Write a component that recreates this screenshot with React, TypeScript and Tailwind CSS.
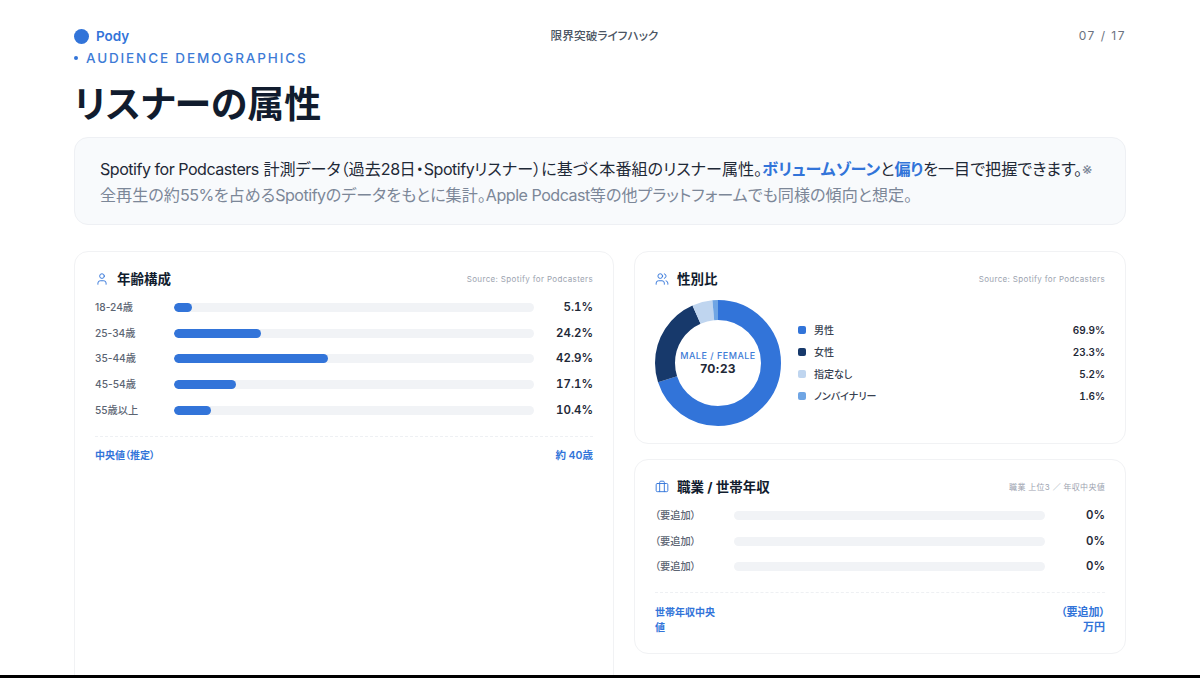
import React from "react";
import { User, Users, Briefcase } from "lucide-react";

const ages = [
  ["18-24歳", 5.1],
  ["25-34歳", 24.2],
  ["35-44歳", 42.9],
  ["45-54歳", 17.1],
  ["55歳以上", 10.4],
] as const;

const genders = [
  ["男性", "69.9%", "#3274d9", 69.9],
  ["女性", "23.3%", "#17396b", 23.3],
  ["指定なし", "5.2%", "#bfd5ef", 5.2],
  ["ノンバイナリー", "1.6%", "#6fa5e4", 1.6],
] as const;

function Bar({ label, value, pct, labelW, valW }: { label: string; value: string; pct: number; labelW: string; valW: string }) {
  return (
    <div className="flex items-center h-[25.6px]">
      <div className={`${labelW} shrink-0 text-[10.2px] font-medium text-[#5b6472]`}>{label}</div>
      <div className="flex-1 h-[9px] rounded-full bg-[#f1f3f6] overflow-hidden">
        <div className="h-full rounded-full bg-[#3274d9]" style={{ width: `${pct}%` }} />
      </div>
      <div className={`${valW} shrink-0 text-right text-[11.5px] font-semibold tabular-nums text-[#1f2937]`}>{value}</div>
    </div>
  );
}

function Donut() {
  const r = 53;
  const c = 2 * Math.PI * r;
  let acc = 0;
  return (
    <svg width="126" height="126" viewBox="0 0 126 126" className="shrink-0">
      <g transform="rotate(-90 63 63)">
        {genders.map(([name, , color, v]) => {
          const len = (v / 100) * c;
          const el = (
            <circle key={name} cx="63" cy="63" r={r} fill="none" stroke={color} strokeWidth="20" strokeDasharray={`${len} ${c - len}`} strokeDashoffset={-acc} />
          );
          acc += len;
          return el;
        })}
      </g>
    </svg>
  );
}

function L({ children }: { children: React.ReactNode }) {
  return <span className="tracking-[-0.5px]">{children}</span>;
}

export default function App() {
  return (
    <div className="w-[1200px] h-[678px] overflow-hidden bg-white flex flex-col font-['Inter','Noto_Sans_CJK_JP',sans-serif] [font-feature-settings:'palt'] text-[#0f1b2d]">
      <div className="h-[675px] overflow-hidden px-[74px] pt-[26px]">
        <div className="grid grid-cols-[1fr_auto_1fr] items-center h-[18px]">
          <div className="flex items-center gap-[7px]">
            <span className="w-[15px] h-[15px] rounded-full bg-[#3274d9]" />
            <span className="text-[13.5px] font-semibold text-[#3274d9]">Pody</span>
          </div>
          <div className="pl-[9px] pt-[2px] text-[11.7px] font-medium text-[#4b5563]">限界突破ライフハック</div>
          <div className="text-right text-[12px] tracking-[1.5px] text-[#6b7280]">07 / 17</div>
        </div>
        <div className="flex items-center gap-[8px] mt-[6px] h-[16px] text-[13.5px] font-medium tracking-[1.85px] text-[#3d7bd6]">
          <span className="w-[4px] h-[4px] rounded-full bg-[#3274d9]" />
          AUDIENCE DEMOGRAPHICS
        </div>
        <h1 className="mt-[17px] text-[37px] leading-[44px] font-bold text-[#111c2e]">リスナーの属性</h1>
        <div className="mt-[10px] h-[88px] rounded-[14px] border border-[#eef0f4] bg-[#f8fafc] px-[25px] pt-[18px] text-[16.1px] leading-[26px] text-[#1f2937]">
          <p>
            <L>Spotify for Podcasters</L> 計測データ（過去<L>28</L>日・<L>Spotify</L>リスナー）に基づく本番組のリスナー属性。
            <b className="font-semibold text-[#3274d9]">ボリュームゾーン</b>と<b className="font-semibold text-[#3274d9]">偏り</b>を一目で把握できます。
            <span className="text-[#7c8798]">※全再生の約<L>55%</L>を占める<L>Spotify</L>のデータをもとに集計。<L>Apple Podcast</L>等の他プラットフォームでも同様の傾向と想定。</span>
          </p>
        </div>
        <div className="mt-[26px] grid grid-cols-[540px_492px] gap-x-[20px]">
          <section className="h-[500px] rounded-[14px] border border-[#f1f2f4] bg-white px-[20px] pt-[17px]">
            <div className="flex items-center justify-between h-[20px]">
              <div className="flex items-center gap-[8px]">
                <User size={14} className="text-[#3274d9]" strokeWidth={1.6} />
                <h2 className="text-[13.5px] font-bold text-[#111c2e]">年齢構成</h2>
              </div>
              <span className="text-[8px] tracking-[0.35px] text-[#9ca3af]">Source: Spotify for Podcasters</span>
            </div>
            <div className="mt-[6px]">
              {ages.map(([l, v]) => (
                <Bar key={l} label={l} value={`${v}%`} pct={v} labelW="w-[79px]" valW="w-[59px]" />
              ))}
            </div>
            <div className="mt-[13px] border-t border-dashed border-[#eef0f3] pt-[11px] flex justify-between text-[10px] font-semibold text-[#3274d9]">
              <span>中央値（推定）</span>
              <span className="text-[10.5px]">約 40歳</span>
            </div>
          </section>
          <div className="flex flex-col gap-[15px]">
            <section className="h-[193px] rounded-[14px] border border-[#f1f2f4] bg-white px-[20px] pt-[17px]">
              <div className="flex items-center justify-between h-[20px]">
                <div className="flex items-center gap-[8px]">
                  <Users size={14} className="text-[#3274d9]" strokeWidth={1.6} />
                  <h2 className="text-[13.5px] font-bold text-[#111c2e]">性別比</h2>
                </div>
                <span className="text-[8px] tracking-[0.35px] text-[#9ca3af]">Source: Spotify for Podcasters</span>
              </div>
              <div className="mt-[11px] flex items-center gap-[17px]">
                <div className="relative w-[126px] h-[126px] shrink-0">
                  <Donut />
                  <div className="absolute inset-0 flex flex-col items-center justify-center">
                    <span className="text-[9px] leading-[12px] font-medium tracking-[0.5px] text-[#3d7bd6]">MALE / FEMALE</span>
                    <span className="text-[12px] leading-[14px] font-bold tracking-[0.3px] text-[#1f2937]">70:23</span>
                  </div>
                </div>
                <div className="flex-1">
                  {genders.map(([name, val, color]) => (
                    <div key={name} className="flex items-center h-[22px]">
                      <span className="w-[8px] h-[8px] rounded-[2px] mr-[8px]" style={{ background: color }} />
                      <span className="flex-1 text-[10px] font-medium text-[#374151]">{name}</span>
                      <span className="text-[10px] font-semibold tabular-nums text-[#1f2937]">{val}</span>
                    </div>
                  ))}
                </div>
              </div>
            </section>
            <section className="h-[195px] rounded-[14px] border border-[#f1f2f4] bg-white px-[20px] pt-[17px]">
              <div className="flex items-center justify-between h-[20px]">
                <div className="flex items-center gap-[8px]">
                  <Briefcase size={14} className="text-[#3274d9]" strokeWidth={1.6} />
                  <h2 className="text-[13.5px] font-bold text-[#111c2e]">職業 / 世帯年収</h2>
                </div>
                <span className="text-[8px] tracking-[0.3px] text-[#9ca3af]">職業 上位3 ／ 年収中央値</span>
              </div>
              <div className="mt-[6px]">
                <Bar label="（要追加）" value="0%" pct={0} labelW="w-[79px]" valW="w-[60px]" />
                <Bar label="（要追加）" value="0%" pct={0} labelW="w-[79px]" valW="w-[60px]" />
                <Bar label="（要追加）" value="0%" pct={0} labelW="w-[79px]" valW="w-[60px]" />
              </div>
              <div className="mt-[12px] border-t border-dashed border-[#eef0f3] pt-[12px] flex justify-between text-[10px] leading-[15px] font-semibold text-[#3274d9]">
                <span className="w-[64px]">世帯年収中央値</span>
                <span className="text-right text-[11px]">（要追加）<br />万円</span>
              </div>
            </section>
          </div>
        </div>
      </div>
      <div className="h-[3px] bg-black" />
    </div>
  );
}
